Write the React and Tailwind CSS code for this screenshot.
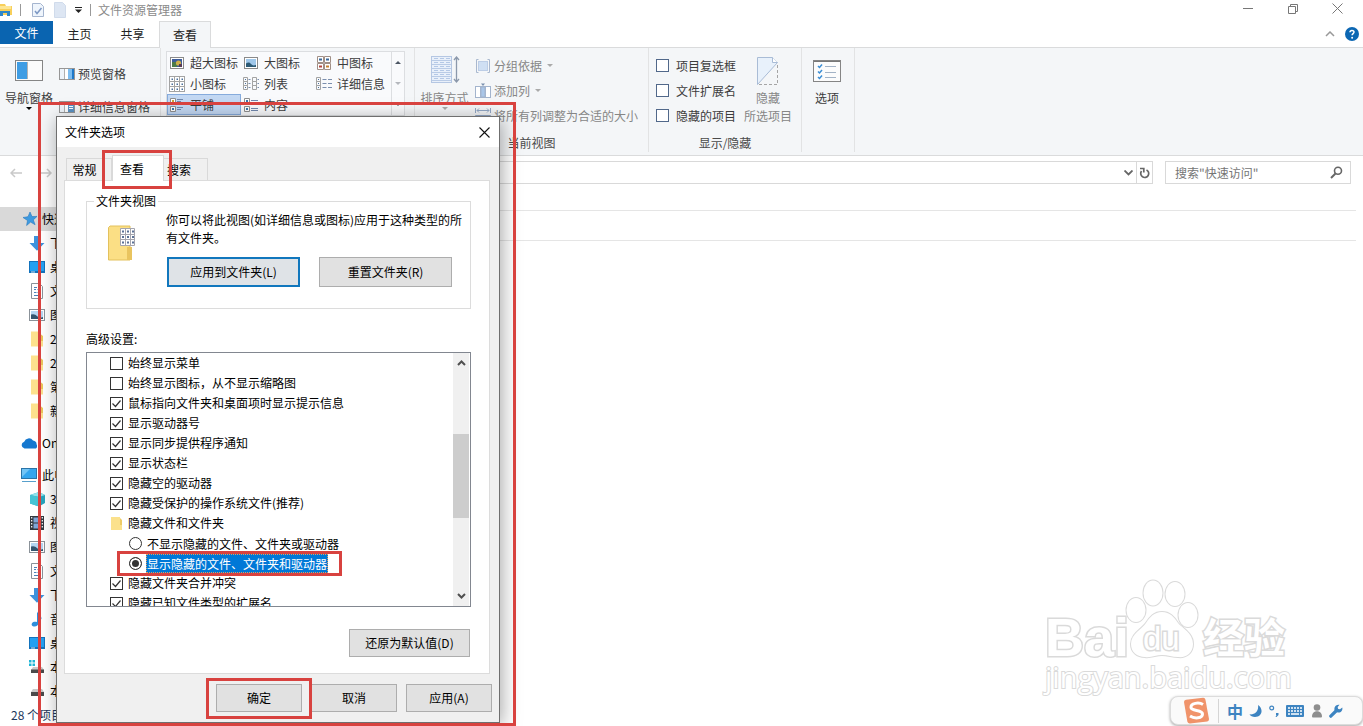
import React from "react";

const RED = "pointer-events-none absolute border-[3px] border-[#d8423f]";

/* ---------- icons ---------- */
function SmallIcon() {
  const steps = [0, 1, 2];
  return (
    <svg width="16" height="16" viewBox="0 0 16 16" fill="none" className="shrink-0">
      {steps.map((r) =>
        steps.map((c) => (
          <g key={c + "-" + r}>
            <rect x={c * 5 + 0.5} y={r * 5 + 0.5} width="5" height="5" fill="#fff" stroke="#a3a3a3" />
            <rect x={c * 5 + 2.5} y={r * 5 + 2.5} width="1.5" height="1.5" fill="#4a6f9c" />
          </g>
        ))
      )}
    </svg>
  );
}
function PictureIcon({ tone }) {
  return (
    <svg width="16" height="16" viewBox="0 0 16 16" className="shrink-0">
      <rect x="1.5" y="2.5" width="13" height="11" fill="#fff" stroke="#8a8a8a" />
      <rect x="3" y="4" width="10" height="8" fill={tone === "dark" ? "#3d5c9c" : "#9fc7ea"} />
      {tone === "dark" ? (
        <g>
          <rect x="3" y="7" width="5" height="5" fill="#4d7a49" />
          <circle cx="9.5" cy="8" r="2.6" fill="#cfb04a" />
          <rect x="10" y="9" width="3" height="3" fill="#583b55" />
        </g>
      ) : (
        <path d="M3 12V8.500q3-2 5 .5t5 .8V12z" fill="#2d5a75" />
      )}
    </svg>
  );
}
function MediumIcon() {
  return (
    <svg width="16" height="16" viewBox="0 0 16 16" fill="#fff" stroke="#a08f86" className="shrink-0">
      <path d="M1.500 1.500h6v6h-6zM8.500 1.500h6v6h-6zM1.500 8.500h6v6h-6zM8.500 8.500h6v6h-6z" />
      <path d="M3 4.500h3M10 4.500h3" stroke="#39699c" strokeWidth="2" />
      <path d="M3 11.500h3" stroke="#b4443c" strokeWidth="2" />
      <path d="M10 11.500h3" stroke="#c6802e" strokeWidth="2" />
    </svg>
  );
}
function ListIcon({ details }) {
  return (
    <svg width="16" height="16" viewBox="0 0 16 16" fill="none" stroke="#a3a3a3" className="shrink-0">
      <path d="M.5 1.500h4v4h-4zM.5 5.500h4v4h-4zM.5 9.500h4v4h-4z" />
      <path d="M2 3.500h1M2 7.500h1M2 11.500h1" stroke="#4a6f9c" />
      {details ? (
        <path d="M6.500 3.500h4M12 3.500h4M6.500 7.500h4M12 7.500h4M6.500 11.500h4M12 11.500h4" stroke="#7b8fae" />
      ) : (
        <g>
          <path d="M9.500 1.500h4v4h-4zM9.500 5.500h4v4h-4zM9.500 9.500h4v4h-4z" />
          <path d="M5.500 3.500h2M5.500 7.500h2M5.500 11.500h2M14.500 3.500h1.500M14.500 7.500h1.500M14.500 11.500h1.500" stroke="#7b8fae" />
        </g>
      )}
    </svg>
  );
}
function TilesIcon({ content }) {
  return (
    <svg width="16" height="16" viewBox="0 0 16 16" fill="none" stroke="#8f8f8f" className="shrink-0">
      <path d="M1.500 1.500h5v5h-5zM1.500 9.500h5v5h-5z" fill="#fff" />
      <rect x="3" y="3" width="2" height="2" fill={content ? "#3b76ae" : "#c9a13b"} stroke="none" />
      <rect x="3" y="11" width="2" height="2" fill="#3b76ae" stroke="none" />
      <path d={content ? "M8 3.500h7M8 5.500h7M8 11.500h7M8 13.500h7" : "M8 2.500h6M8 4.500h4M8 6.500h3M8 10.500h6M8 12.500h4"} stroke="#7288ad" />
    </svg>
  );
}
function PaneIcon({ kind }) {
  return (
    <svg width="16" height="12" viewBox="0 0 16 12" className="shrink-0">
      <rect x=".5" y=".5" width="15" height="11" fill="#fff" stroke="#969696" />
      <path d="M1 1h5v10H1z" fill="#eef4fa" />
      <path d="M5.500 1v10" stroke="#b0b0b0" />
      <rect x="9" y="1" width="6" height="10" fill={kind === "details" ? "#5c93c4" : "#7dbdf0"} />
      {kind === "details" ? <path d="M10 3.500h4M10 5.500h4M10 7.500h4" stroke="#fff" /> : <rect x="13" y="1" width="2" height="10" fill="#1e78c8" />}
    </svg>
  );
}
function NavPaneIcon() {
  return (
    <svg width="28" height="21" viewBox="0 0 28 21">
      <rect x=".5" y=".5" width="27" height="20" fill="#fbfbfb" stroke="#858585" />
      <rect x="2" y="2" width="10" height="17" fill="#3f9de4" />
      <path d="M12.500 2v17" stroke="#b3b3b3" />
    </svg>
  );
}
function SortIcon() {
  return (
    <svg width="30" height="28" viewBox="0 0 30 28" fill="none">
      <rect x="1.500" y=".5" width="20" height="26" fill="#e9f0fa" stroke="#b5c7e3" />
      <path d="M2 4.500h19M2 8.500h19M2 12.500h19M2 16.500h19M2 20.500h19M2 24.500h19" stroke="#b9cbe6" />
      <path d="M4 2.500h4m2 0h4m2 0h4M4 6.500h4m2 0h4m2 0h4M4 10.500h4m2 0h4m2 0h4M4 14.500h4m2 0h4m2 0h4M4 18.500h4m2 0h4m2 0h4M4 22.500h4m2 0h4m2 0h4" stroke="#b4c8e6" />
      <path d="M26.500 2v23M24 4l2.500-3L29 4M24 23l2.500 3 2.500-3" stroke="#8b98ab" strokeWidth="1.300" />
    </svg>
  );
}
function GroupIcon() {
  return (
    <svg width="16" height="16" viewBox="0 0 16 16" fill="none" stroke="#a9b8cf" className="shrink-0">
      <path d="M3.500 1.500h-2v13h2M12.500 1.500h2v13h-2" />
      <rect x="3.500" y="3.500" width="9" height="9" fill="#cfdff3" stroke="#bccde6" />
    </svg>
  );
}
function ColumnIcon() {
  return (
    <svg width="16" height="16" viewBox="0 0 16 16" fill="none" stroke="#a3b4cd" className="shrink-0">
      <rect x=".5" y="3.500" width="15" height="11" fill="#fff" />
      <rect x="6" y="4" width="4" height="10" fill="#a9c6e8" />
      <path d="M5.500 3v11M10.500 3v11" />
      <path d="M6 .5h4L8 3z" fill="#7a8fae" stroke="none" />
    </svg>
  );
}
function FitIcon() {
  return (
    <svg width="16" height="16" viewBox="0 0 16 16" fill="none" stroke="#93a8c6" className="shrink-0">
      <path d="M.5 0v5M15.500 0v5M2 2.500h12M4 .5l-2 2 2 2M12 .5l2 2-2 2" />
      <path d="M.5 7.500h15v7H.5zM5.500 7.500v7M10.500 7.500v7" fill="#dce7f5" />
    </svg>
  );
}
function HideIcon() {
  return (
    <svg width="22" height="28" viewBox="0 0 22 28" fill="none">
      <path d="M.5 27.500V.5h15l5 5z" fill="#e8f1fb" />
      <path d="M.5 27.500V.5h15l5 5L.5 27.500" stroke="#a9bcd6" />
      <path d="M15.500.5v5h5" stroke="#a9bcd6" fill="#fff" />
      <path d="M20.500 8v19.500H1" stroke="#a5a5a5" strokeDasharray="3 2" />
    </svg>
  );
}
function OptionsIcon() {
  return (
    <svg width="28" height="22" viewBox="0 0 28 22" fill="none">
      <rect x=".5" y=".5" width="27" height="21" fill="#fcfcfc" stroke="#858585" />
      <path d="M1 1.500h26" stroke="#777" />
      <path d="M5 6l1.500 1.500L9 4.500M5 11.500L6.500 13 9 10M5 17l1.500 1.500L9 15.500" stroke="#3c8ed4" strokeWidth="1.500" />
      <path d="M12 6.500h11M12 12.500h11M12 17.500h11" stroke="#a3b3c6" />
    </svg>
  );
}
function FolderOptionsIcon() {
  return (
    <svg width="28" height="37" viewBox="0 0 28 37" fill="none">
      <path d="M.5 2.500L2 1h20v34H.5z" fill="#fbdf85" stroke="#e3c15d" />
      <path d="M19 22h5v13h-5z" fill="#e9c45f" />
      <g fill="#fff" stroke="#a5a5ae">
        <path d="M12.500 3.500h14v17h-14zM17.500 3.500v17M22.500 3.500v17M12.500 9.500h14M12.500 14.500h14" />
      </g>
      <path d="M14 6.500h2M19 6.500h2M24 6.500h2M14 12h2M19 12h2M24 12h2M14 17.500h2M19 17.500h2M24 17.500h2" stroke="#5b7196" strokeWidth="2" />
    </svg>
  );
}
function SideIcon({ kind }) {
  const art = {
    star: <path d="M9 1l2 4.600 5-.2-3.700 3.500 1.800 4.800-4.500-2.600L5.600 14.500l.9-5L2 6.500l5-.8z" fill="#3d9ae0" stroke="#2878bd" strokeWidth=".6" />,
    down: <path d="M5 1h6v7h4.500L8 15.800.5 8H5z" fill="#3d92dc" />,
    desktop: (
      <g>
        <rect x="0" y="2" width="16" height="12" fill="#1373bd" />
        <rect x="1" y="3" width="14" height="9" fill="#23a0f2" />
        <path d="M2 13h4" stroke="#fff" strokeWidth=".8" />
      </g>
    ),
    doc: (
      <g fill="none">
        <path d="M2.500.5h8l3 3v12h-11z" fill="#fff" stroke="#8b9299" />
        <path d="M5 4.500h3M5 6.500h2M8.500 6.500h3M5 9.500h2.500M8.500 9.500h3M5 12.500h6" stroke="#4a82b8" />
      </g>
    ),
    pic: (
      <g>
        <rect x=".5" y="2.500" width="15" height="11" fill="#fff" stroke="#8b9299" />
        <rect x="2" y="4" width="12" height="8" fill="#b5d6f2" />
        <path d="M2 12V7.500q4-1 6 1.500t6 1V12z" fill="#34566f" />
      </g>
    ),
    folder: (
      <g>
        <path d="M2 .5h9.500V10H14v5.500H2z" fill="#fde18d" />
        <path d="M11.500 3v7H14V5z" fill="#ecc65b" />
      </g>
    ),
    cloud: <path d="M3.500 13.500a3.500 3.500 0 01-.3-6.800A5 5 0 0112 5.500a4 4 0 013.600 4 3 3 0 01-.6 4z" fill="#1578cf" />,
    pc: (
      <g>
        <rect x=".5" y="1.500" width="15" height="10" fill="#33a5ee" stroke="#2a74a8" />
        <path d="M1 2h8L1 10z" fill="#72c4f5" />
        <path d="M1 14.500h14" stroke="#58a0cc" />
      </g>
    ),
    cube: (
      <g>
        <path d="M1 4l9-3 6 3v8l-6 3.500-9-3z" fill="#27a4bd" />
        <path d="M1 4l9-3 6 3-6 2z" fill="#8fe3ec" />
        <path d="M1 4l9 2v9.500l-9-3z" fill="#46c3d4" />
      </g>
    ),
    film: (
      <g>
        <rect x="1" y="1" width="14" height="14" fill="#33383f" />
        <path d="M4.500 2.500h7v5h-7zM4.500 8.500h7v5h-7z" fill="#7fa6d8" />
        <path d="M2.700 2v12M13.300 2v12" stroke="#fff" strokeWidth="1.200" strokeDasharray="1.500 1.500" />
      </g>
    ),
    music: <path d="M8 .5c1 3 5 3.500 4.500 8-1-2-2-2.500-3-2.700V12c0 2-1.800 3.500-4 3.500S2 14 3 12.300 6 10.500 8 11z" fill="#2d8fdc" />,
    winDrive: (
      <g>
        <path d="M0 1h2.500v2.500H0zM3.500 1H6v2.500H3.500zM0 4.500h2.500V7H0zM3.500 4.500H6V7H3.500z" fill="#1fb6d6" />
        <path d="M4 8h9l2 3H2z" fill="#c9c9c9" />
        <path d="M2 10.500h13V14H2z" fill="#4b4b4b" />
      </g>
    ),
    drive: (
      <g>
        <path d="M4 6h9l2 3H2z" fill="#c9c9c9" />
        <path d="M2 9h13v4H2z" fill="#4b4b4b" />
      </g>
    ),
  };
  return (
    <svg width="16" height="16" viewBox="0 0 16 16" className="shrink-0">
      {art[kind]}
    </svg>
  );
}
function Caret({ className = "" }) {
  return (
    <svg width="6" height="3" viewBox="0 0 6 3" className={className}>
      <path d="M0 0h6L3 3z" fill="currentColor" />
    </svg>
  );
}

/* ---------- controls ---------- */
function Check({ label, checked, size = "dialog" }) {
  return (
    <label className={size === "ribbon" ? "flex h-[25px] items-center gap-[7px]" : "flex h-5 items-center gap-[5px]"}>
      <span className="relative block h-[13px] w-[13px] shrink-0">
        <input
          type="checkbox"
          defaultChecked={checked}
          className={
            "peer block h-[13px] w-[13px] appearance-none border bg-white " +
            (size === "ribbon" ? "border-[#51688a]" : "border-[#333]")
          }
        />
        <svg viewBox="0 0 13 13" className="pointer-events-none absolute inset-0 hidden h-[13px] w-[13px] peer-checked:block" fill="none">
          <path d="M2.500 6.500l3 3 5-6" stroke="#333" strokeWidth="1.200" />
        </svg>
      </span>
      <span>{label}</span>
    </label>
  );
}
function Radio({ label, checked }) {
  return (
    <label className="flex h-5 items-center pl-[19px]">
      <input
        type="radio"
        name="hidden-files"
        defaultChecked={checked}
        className="h-[13px] w-[13px] shrink-0 appearance-none rounded-full border border-[#333] bg-white checked:bg-[#333] checked:shadow-[inset_0_0_0_2px_#fff]"
      />
      <span
        className={
          checked
            ? "ml-1 border border-dotted border-[#e0a060] bg-[#0078d7] leading-[17px] text-white"
            : "ml-1 border border-transparent leading-[17px]"
        }
      >
        {label}
      </span>
    </label>
  );
}
function Button({ children, className = "" }) {
  return (
    <button type="button" className={"border border-[#adadad] bg-[#e1e1e1] text-center text-black " + className}>
      {children}
    </button>
  );
}

/* ---------- explorer window ---------- */
function TitleBar() {
  return (
    <header className="flex h-[21px] items-start justify-between">
      <div className="flex h-5 items-center">
        <svg width="14" height="16" viewBox="0 0 14 16">
          <path d="M0 2h5l1 2h6v9H0z" fill="#f8cf5a" />
          <path d="M0 4h11v3H0z" fill="#fde694" />
          <path d="M0 9h10v5H7v-3H3v3H0z" fill="#2f87c9" />
        </svg>
        <span className="ml-[6px] h-3 w-px bg-[#999]" />
        <svg width="14" height="16" viewBox="0 0 14 16" className="ml-[10px]" fill="none">
          <path d="M1.500 1.500h8l3 3v10h-11z" fill="#eff5fc" stroke="#a5b5cf" />
          <path d="M4 9l2 2.500L10.500 6" stroke="#7d98c4" strokeWidth="1.500" />
        </svg>
        <svg width="14" height="16" viewBox="0 0 14 16" className="ml-2" fill="none">
          <path d="M1.500.5h8l3 3v12h-11z" fill="#dde6f3" stroke="#d0dbeb" />
        </svg>
        <svg width="7" height="6" viewBox="0 0 7 6" className="ml-2">
          <path d="M0 .5h7" stroke="#222" />
          <path d="M0 2.500h7L3.500 6z" fill="#222" />
        </svg>
        <span className="ml-2 h-3 w-px bg-[#999]" />
        <span className="ml-[7px] text-[#8a8a8a]">文件资源管理器</span>
      </div>
      <div className="mr-[3px] flex text-[#777]">
        <button type="button" aria-label="最小化" className="flex h-[17px] w-[45px] items-center justify-center">
          <span className="h-px w-[10px] bg-[#777]" />
        </button>
        <button type="button" aria-label="还原" className="flex h-[17px] w-[45px] items-center justify-center">
          <svg width="10" height="10" viewBox="0 0 10 10" fill="none" stroke="currentColor">
            <path d="M.5 2.500h7v7h-7zM2.500 2.500v-2h7v7h-2" />
          </svg>
        </button>
        <button type="button" aria-label="关闭" className="flex h-[17px] w-[45px] items-center justify-center">
          <svg width="11" height="11" viewBox="0 0 11 11" stroke="currentColor">
            <path d="M.5.5l10 10M10.500.5l-10 10" />
          </svg>
        </button>
      </div>
    </header>
  );
}
function Tabs() {
  return (
    <nav className="flex h-[27px] items-stretch border-b border-[#dadbdc] text-[#222]">
      <button type="button" className="mb-[3px] w-[53px] bg-[#0a64b0] text-white">文件</button>
      <button type="button" className="w-[53px]">主页</button>
      <button type="button" className="w-[53px]">共享</button>
      <button type="button" className="-mb-px w-[52px] border border-b-0 border-[#dadbdc] bg-[#f4f6f8]">查看</button>
      <span className="flex-1" />
      <button type="button" aria-label="折叠功能区" className="mr-[10px] text-[#999]">
        <svg width="10" height="6" viewBox="0 0 10 6" fill="none" stroke="currentColor" strokeWidth="1.500">
          <path d="M1 5l4-4 4 4" />
        </svg>
      </button>
      <button type="button" aria-label="帮助" className="mr-[4px]">
        <svg width="14" height="14" viewBox="0 0 14 14" fill="none">
          <circle cx="7" cy="7" r="7" fill="#0c67b3" />
          <path d="M5 5.300C5 2.800 9 2.900 9 5.100 9 6.600 7.100 6.600 7.100 8.300" stroke="#fff" strokeWidth="1.500" />
          <circle cx="7.100" cy="10.700" r="1" fill="#fff" />
        </svg>
      </button>
    </nav>
  );
}
function View({ icon, label, selected }) {
  return (
    <button
      type="button"
      className={
        "flex h-[21px] items-center gap-[5px] whitespace-nowrap border pl-px " +
        (selected ? "border-[#86abdc] bg-[#c3d8f3]" : "border-transparent")
      }
    >
      {icon}
      {label}
    </button>
  );
}
function Ribbon() {
  return (
    <section className="flex h-[108px] border-b border-[#dadbdc] bg-[#f4f6f8] pb-[3px] text-[#3c3c3c]">
      <div className="flex w-[161px] items-start border-r border-[#e2e3e4] pl-1">
        <button type="button" className="mt-3 flex w-[50px] flex-col items-center whitespace-nowrap">
          <NavPaneIcon />
          <span className="mt-[8px]">导航窗格</span>
          <Caret className="text-black" />
        </button>
        <div className="mt-[17px] flex flex-col gap-[15px] pl-[5px]">
          <button type="button" className="flex items-center gap-[3px]">
            <PaneIcon /> 预览窗格
          </button>
          <button type="button" className="flex items-center gap-[3px]">
            <PaneIcon kind="details" /> 详细信息窗格
          </button>
        </div>
      </div>

      <div className="w-[254px] border-r border-[#e2e3e4] pl-[5px] pt-[3px]">
        <div className="flex w-[239px] border border-[#dcdee1] bg-[#f9fafc]">
          <div className="grid flex-1 grid-cols-[74px_73px_1fr]">
            <View icon={<PictureIcon tone="dark" />} label="超大图标" />
            <View icon={<PictureIcon />} label="大图标" />
            <View icon={<MediumIcon />} label="中图标" />
            <View icon={<SmallIcon />} label="小图标" />
            <View icon={<ListIcon />} label="列表" />
            <View icon={<ListIcon details />} label="详细信息" />
            <View icon={<TilesIcon />} label="平铺" selected />
            <View icon={<TilesIcon content />} label="内容" />
          </div>
          <div className="grid w-[13px] grid-rows-3 border-l border-[#dcdee1]">
            <button type="button" aria-label="上一行" className="flex items-center justify-center text-[#4b5563]">
              <Caret className="rotate-180" />
            </button>
            <button type="button" aria-label="下一行" className="flex items-center justify-center text-[#b5b8bd]">
              <Caret />
            </button>
            <button type="button" aria-label="更多" className="flex items-center justify-center text-[#4b5563]">
              <Caret />
            </button>
          </div>
        </div>
      </div>

      <div className="flex w-[234px] flex-col justify-between border-r border-[#e2e3e4] text-[#868686]">
        <div className="flex items-start pl-[5px]">
          <button type="button" className="mt-2 flex w-[49px] flex-col items-center whitespace-nowrap">
            <SortIcon />
            <span className="mt-[5px]">排序方式</span>
            <Caret className="text-[#aaa]" />
          </button>
          <div className="ml-[6px] mt-[5px]">
            <button type="button" className="flex h-[25px] items-center gap-[3px]">
              <GroupIcon /> 分组依据 <Caret className="ml-[2px] text-[#aaa]" />
            </button>
            <button type="button" className="flex h-[25px] items-center gap-[3px]">
              <ColumnIcon /> 添加列 <Caret className="ml-[2px] text-[#aaa]" />
            </button>
            <button type="button" className="flex h-[25px] items-center gap-[3px] whitespace-nowrap">
              <FitIcon /> 将所有列调整为合适的大小
            </button>
          </div>
        </div>
        <div className="text-center text-[#4a4a4a]">当前视图</div>
      </div>

      <div className="flex w-[153px] flex-col justify-between border-r border-[#e2e3e4]">
        <div className="flex items-start pl-[7px]">
          <div className="mt-[5px]">
            <Check size="ribbon" label="项目复选框" />
            <Check size="ribbon" label="文件扩展名" />
            <Check size="ribbon" label="隐藏的项目" />
          </div>
          <button type="button" className="ml-2 mt-[9px] flex flex-col items-center text-[#868686]">
            <HideIcon />
            <span className="mt-1">隐藏</span>
            <span>所选项目</span>
          </button>
        </div>
        <div className="text-center text-[#4a4a4a]">显示/隐藏</div>
      </div>

      <div className="w-[53px] border-r border-[#e2e3e4]">
        <button type="button" className="mt-3 flex w-[50px] flex-col items-center">
          <OptionsIcon />
          <span className="mt-[7px]">选项</span>
        </button>
      </div>
    </section>
  );
}
function AddressRow() {
  return (
    <div className="flex h-[29px] items-start gap-3 pr-3 pt-[5px]">
      <div className="flex flex-1 items-center">
        <div className="flex w-[70px] items-center gap-[18px] pl-[10px] text-[#c9c9c9]">
          <button type="button" aria-label="后退">
            <svg width="12" height="10" viewBox="0 0 12 10" fill="none" stroke="currentColor" strokeWidth="1.500">
              <path d="M12 5H1M5 1L1 5l4 4" />
            </svg>
          </button>
          <button type="button" aria-label="前进">
            <svg width="12" height="10" viewBox="0 0 12 10" fill="none" stroke="currentColor" strokeWidth="1.500">
              <path d="M0 5h11M7 1l4 4-4 4" />
            </svg>
          </button>
        </div>
        <div className="flex h-[23px] flex-1 border border-[#d9d9d9]">
          <input aria-label="地址" className="min-w-0 flex-1 px-2 outline-none" />
          <button type="button" aria-label="展开地址" className="w-4 text-[#666]">
            <svg width="9" height="6" viewBox="0 0 9 6" fill="none" stroke="currentColor" strokeWidth="1.800" className="mx-auto">
              <path d="M.5.5l4 4 4-4" />
            </svg>
          </button>
          <button type="button" aria-label="刷新" className="w-4 border-l border-[#d9d9d9] text-[#666]">
            <svg width="11" height="12" viewBox="0 0 11 12" fill="none" stroke="currentColor" strokeWidth="1.700" className="mx-auto">
              <path d="M7.500 2.900a4 4 0 11-5 1.200" />
              <path d="M1 1.500h3.800v4" />
            </svg>
          </button>
        </div>
      </div>
      <label className="flex h-[23px] w-[186px] items-center border border-[#d9d9d9] pl-[9px] pr-[7px]">
        <input aria-label="搜索" placeholder={'搜索"快速访问"'} className="min-w-0 flex-1 outline-none placeholder:text-[#757575]" />
        <svg width="13" height="13" viewBox="0 0 13 13" fill="none" stroke="#666">
          <circle cx="8" cy="4.800" r="3.500" strokeWidth="1.600" />
          <path d="M5.500 7.500L1 12" strokeWidth="2" />
        </svg>
      </label>
    </div>
  );
}

const SIDE = [
  ["star", "快速访问", "top", true],
  ["down", "下载"],
  ["desktop", "桌面"],
  ["doc", "文档"],
  ["pic", "图片"],
  ["folder", "2"],
  ["folder", "2"],
  ["folder", "第"],
  ["folder", "新"],
  ["cloud", "OneDrive", "top"],
  ["pc", "此电脑", "top"],
  ["cube", "3D 对象"],
  ["film", "视频"],
  ["pic", "图片"],
  ["doc", "文档"],
  ["down", "下载"],
  ["music", "音乐"],
  ["desktop", "桌面"],
  ["winDrive", "本地磁盘"],
  ["drive", "本地磁盘"],
];
function SideBar() {
  return (
    <aside className="w-[300px] shrink-0 pt-[22px] text-black">
      {SIDE.map(([kind, label, level, selected], i) => (
        <a
          key={i}
          href="#"
          className={
            "flex h-6 items-center gap-[5px] whitespace-nowrap " +
            (level ? "pl-[21px] " : "pl-[29px] ") +
            (selected ? "bg-[#d9d9d9]" : level ? "mt-2" : "")
          }
        >
          <SideIcon kind={kind} />
          {label}
        </a>
      ))}
    </aside>
  );
}

/* ---------- dialog ---------- */
function Dialog() {
  return (
    <section
      role="dialog"
      aria-label="文件夹选项"
      className="absolute left-14 top-[116px] w-[444px] border border-[#6f6f6f] bg-[#f0f0f0] text-black shadow-[2px_3px_18px_rgba(0,0,0,0.35)]"
    >
      <div className="flex h-[30px] items-center justify-between bg-white pl-2 pr-[9px]">
        <span>文件夹选项</span>
        <button type="button" aria-label="关闭">
          <svg width="11" height="11" viewBox="0 0 11 11" stroke="#111" strokeWidth="1.100">
            <path d="M.5.5l10 10M10.500.5l-10 10" />
          </svg>
        </button>
      </div>
      <div className="pb-[10px] pl-[7px] pr-[7px]">
        <div className="flex h-[33px] items-end pl-[2px]">
          <button type="button" className="h-[22px] w-[46px] border border-b-0 border-[#d9d9d9] pr-[9px]">常规</button>
          <button type="button" className="relative -mb-px h-[26px] w-[52px] border border-b-0 border-[#d9d9d9] bg-white pr-3">查看</button>
          <button type="button" className="h-[22px] w-[44px] border border-b-0 border-l-0 border-[#d9d9d9] pr-[13px]">搜索</button>
        </div>
        <div className="mr-[2px] border border-[#dcdcdc] bg-white pb-4 pl-[21px] pr-[18px] pt-[11px]">
          <fieldset className="border border-[#dcdcdc] pb-[21px] pl-[21px] pr-[6px]">
            <legend className="-ml-[14px] px-[2px] leading-[18px]">文件夹视图</legend>
            <div className="flex items-start pt-px">
              <span className="w-[58px] shrink-0 pt-[14px]">
                <FolderOptionsIcon />
              </span>
              <div>
                <p className="leading-[18px]">你可以将此视图(如详细信息或图标)应用于这种类型的所有文件夹。</p>
                <div className="mt-[10px] flex gap-[19px] pl-px">
                  <button type="button" className="h-[30px] w-[133px] border-2 border-[#1177bd] bg-[#dfe3e7]">应用到文件夹(L)</button>
                  <Button className="h-[30px] w-[133px]">重置文件夹(R)</Button>
                </div>
              </div>
            </div>
          </fieldset>
          <div className="mt-[21px] leading-[18px]">高级设置:</div>
          <div className="mt-1 flex h-[255px] overflow-hidden border border-[#828790]">
            <div className="h-full flex-1 overflow-hidden pl-[23px]">
              <Check label="始终显示菜单" />
              <Check label="始终显示图标，从不显示缩略图" />
              <Check label="鼠标指向文件夹和桌面项时显示提示信息" checked />
              <Check label="显示驱动器号" checked />
              <Check label="显示同步提供程序通知" checked />
              <Check label="显示状态栏" checked />
              <Check label="隐藏空的驱动器" checked />
              <Check label="隐藏受保护的操作系统文件(推荐)" checked />
              <div className="flex h-5 items-center gap-[5px]">
                <svg width="13" height="14" viewBox="0 0 13 14">
                  <path d="M1 1h9v8h2v5H1z" fill="#fbe18c" />
                  <path d="M10 2v7h2V4z" fill="#edcb66" />
                </svg>
                隐藏文件和文件夹
              </div>
              <Radio label="不显示隐藏的文件、文件夹或驱动器" />
              <Radio label="显示隐藏的文件、文件夹和驱动器" checked />
              <Check label="隐藏文件夹合并冲突" checked />
              <Check label="隐藏已知文件类型的扩展名" checked />
            </div>
            <div className="mr-px flex w-4 flex-col bg-[#f0f0f0]">
              <button type="button" aria-label="向上滚动" className="flex h-5 items-center justify-center">
                <svg width="9" height="6" viewBox="0 0 9 6" fill="none" stroke="#505050" strokeWidth="2">
                  <path d="M1 5l3.500-3.500L8 5" />
                </svg>
              </button>
              <div className="flex-1 pt-[61px]">
                <div className="h-[84px] bg-[#cdcdcd]" />
              </div>
              <button type="button" aria-label="向下滚动" className="flex h-5 items-center justify-center">
                <svg width="9" height="6" viewBox="0 0 9 6" fill="none" stroke="#505050" strokeWidth="2">
                  <path d="M1 1l3.500 3.500L8 1" />
                </svg>
              </button>
            </div>
          </div>
          <div className="mt-[22px] flex justify-end pr-px">
            <Button className="h-7 w-[121px]">还原为默认值(D)</Button>
          </div>
        </div>
        <div className="mt-[10px] flex justify-end gap-[9px]">
          <Button className="h-7 w-[86px]">确定</Button>
          <Button className="h-7 w-[86px]">取消</Button>
          <Button className="h-7 w-[86px]">应用(A)</Button>
        </div>
      </div>
    </section>
  );
}

/* ---------- corner overlays ---------- */
function Watermark() {
  return (
    <svg
      width="260"
      height="124"
      viewBox="0 0 260 124"
      className="pointer-events-none absolute bottom-[26px] right-[63px]"
      fill="#fff"
      stroke="#dadada"
      strokeWidth="2"
      paintOrder="stroke"
    >
      <text x="5" y="80" fontSize="54" fontWeight="700" fontFamily="Liberation Sans, sans-serif" strokeWidth="3">Bai</text>
      <ellipse cx="96" cy="34" rx="9.500" ry="12" />
      <ellipse cx="113" cy="17" rx="9.500" ry="12.500" />
      <ellipse cx="135" cy="18" rx="9.500" ry="12" />
      <ellipse cx="148" cy="39" rx="9.500" ry="12" />
      <path d="M122 36c8 0 12 5 16 11 4 5 15 10 15 21 0 9-7 14-15 13-6 0-10-2-16-2s-11 3-17 2c-8 0-14-5-14-13 0-10 11-15 15-21 4-6 8-11 16-11z" />
      <text x="103" y="74" fontSize="33" fontFamily="Liberation Sans, sans-serif" strokeWidth="3">du</text>
      <text x="163" y="77" fontSize="41" fontWeight="700" fontFamily="Noto Sans CJK SC, sans-serif" strokeWidth="3">经验</text>
      <text x="5" y="112" fontSize="29" fontFamily="Open Sans, sans-serif">jingyan.baidu.com</text>
    </svg>
  );
}
function ImeBar() {
  return (
    <div className="absolute bottom-[1px] right-0 flex h-[29px] w-[193px] items-center rounded-lg border border-[#dcdcdc] bg-[#fafafa] pl-[10px] text-[#3d84c1] shadow-[0_1px_3px_rgba(0,0,0,0.35)]">
      <svg width="30" height="28" viewBox="0 0 30 28" fill="none">
        <path d="M3 5q0-2 2-2.300L22 .8q2-.2 2.400 1.800L28 22q.3 2-1.700 2.400L9 26.500q-2 .2-2.600-1.800z" fill="#f0936a" />
        <path d="M22 7.500C18 5 9.500 6 10 10.500c.5 4 11.500 2 11.500 6.500 0 4.500-8 5-12.500 2" stroke="#fff" strokeWidth="3" />
      </svg>
      <span className="ml-[7px] h-6 w-px bg-[#d5d5d5]" />
      <button type="button" className="ml-[8px] w-4 text-center text-[16px] font-bold">中</button>
      <svg width="14" height="14" viewBox="0 0 14 14" className="ml-[6px]">
        <path d="M9 1c6 4 4 12-3 12-2.500 0-4.500-1-5.500-2.700C6 11 10 7 9 1z" fill="currentColor" />
      </svg>
      <svg width="10" height="12" viewBox="0 0 10 12" className="ml-[6px]" fill="none">
        <circle cx="2.700" cy="3" r="1.900" stroke="currentColor" strokeWidth="1.200" />
        <path d="M7 8h2.500v2L7.500 12H6.500l1-2H7z" fill="currentColor" />
      </svg>
      <svg width="18" height="12" viewBox="0 0 18 12" className="ml-[7px]" fill="none">
        <rect width="18" height="12" rx="1" fill="currentColor" />
        <path d="M2 3h14M2 6h14" stroke="#fff" strokeWidth="1.500" strokeDasharray="2 1" />
        <path d="M2 9h2M5 9h8M14 9h2" stroke="#fff" strokeWidth="1.500" />
      </svg>
      <svg width="12" height="14" viewBox="0 0 12 14" className="ml-[7px]" fill="#8e8e8e">
        <circle cx="6" cy="3.500" r="3.300" />
        <path d="M1 12.500c0-7 10-7 10 0q0 1-1 1H2q-1 0-1-1z" />
      </svg>
      <svg width="14" height="14" viewBox="0 0 14 14" className="ml-[6px]" fill="none">
        <path d="M1.800 12.200L8 6" stroke="currentColor" strokeWidth="3.200" strokeLinecap="round" />
        <path d="M10.500.7L8.700 3l.3 2 2 .3 2.300-1.800c.6 3-1.300 5.300-4.300 5C6 8.200 4.800 6 5.500 3.800 6.200 1.600 8 .3 10.500.7z" fill="currentColor" />
      </svg>
    </div>
  );
}

export default function App() {
  return (
    <main className="relative flex min-h-screen flex-col overflow-hidden bg-white font-['Noto_Sans_CJK_SC','Open_Sans',sans-serif] text-[12px] leading-[18px]">
      <TitleBar />
      <Tabs />
      <Ribbon />
      <AddressRow />
      <div className="flex flex-1">
        <SideBar />
        <div className="mr-[7px] mt-[25px] flex-1">
          <div className="h-[31px] border-y border-[#e5e5e5]" />
        </div>
      </div>
      <footer className="flex h-[23px] items-center pl-[11px] text-[#1e395b]">28 个项目</footer>

      <Dialog />
      <Watermark />
      <ImeBar />

      <div className={RED + " bottom-0 left-[38px] top-[102px] w-[478px]"} />
      <div className={RED + " left-[102px] top-[150px] h-[39px] w-[70px]"} />
      <div className={RED + " left-[117px] top-[551px] h-[25px] w-[225px]"} />
      <div className={RED + " left-[206px] top-[678px] h-[41px] w-[106px]"} />
    </main>
  );
}
